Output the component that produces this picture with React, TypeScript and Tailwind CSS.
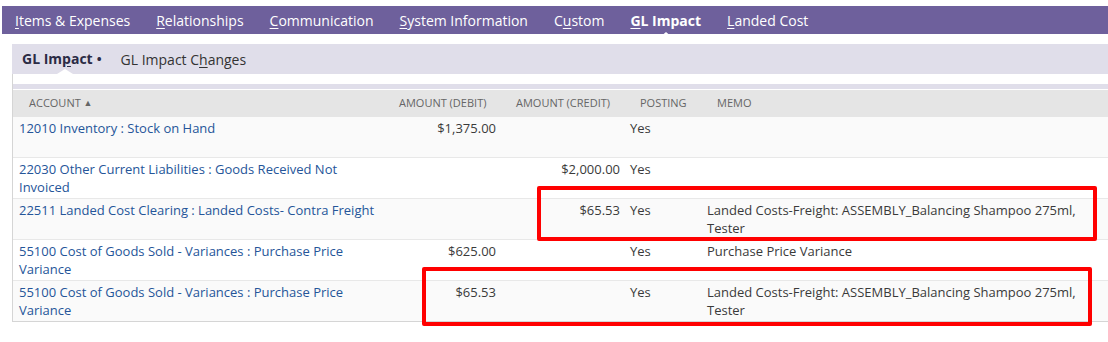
import React from "react"

const navItems: { pre: string; key: string; post: string; active?: boolean }[] = [
    { pre: "", key: "I", post: "tems & Expenses" },
    { pre: "", key: "R", post: "elationships" },
    { pre: "", key: "C", post: "ommunication" },
    { pre: "", key: "S", post: "ystem Information" },
    { pre: "C", key: "u", post: "stom" },
    { pre: "", key: "G", post: "L Impact", active: true },
    { pre: "", key: "L", post: "anded Cost" },
]

type Row = {
    account: React.ReactNode
    debit?: string
    credit?: string
    memo?: React.ReactNode
}

const rows: Row[] = [
    { account: "12010 Inventory : Stock on Hand", debit: "$1,375.00" },
    {
        account: (
            <>
                22030 Other Current Liabilities : Goods Received Not
                <br />
                Invoiced
            </>
        ),
        credit: "$2,000.00",
    },
    {
        account: "22511 Landed Cost Clearing : Landed Costs- Contra Freight",
        credit: "$65.53",
        memo: (
            <>
                Landed Costs-Freight: ASSEMBLY_Balancing Shampoo 275ml,
                <br />
                Tester
            </>
        ),
    },
    {
        account: (
            <>
                55100 Cost of Goods Sold - Variances : Purchase Price
                <br />
                Variance
            </>
        ),
        debit: "$625.00",
        memo: "Purchase Price Variance",
    },
    {
        account: (
            <>
                55100 Cost of Goods Sold - Variances : Purchase Price
                <br />
                Variance
            </>
        ),
        debit: "$65.53",
        memo: (
            <>
                Landed Costs-Freight: ASSEMBLY_Balancing Shampoo 275ml,
                <br />
                Tester
            </>
        ),
    },
]

const cols = "grid grid-cols-[380px_109px_124px_77px_1fr]"

export default function App() {
    return (
        <main
            className="relative w-[1108px] h-[342px] overflow-hidden bg-white"
            style={{ fontFamily: '"Open Sans", "Liberation Sans", sans-serif' }}
        >
            {/* Main tabs */}
            <nav className="mt-[6px] ml-[2px] h-[28px] bg-[#6e609c] flex items-center gap-[26px] pl-[13px] text-[14px] text-white whitespace-nowrap">
                {navItems.map((n) => (
                    <span key={n.post} className={`relative ${n.active ? "font-bold" : ""}`}>
                        {n.pre}
                        <span className="underline underline-offset-2">{n.key}</span>
                        {n.post}
                        {n.active && (
                            <span className="absolute left-1/2 -translate-x-1/2 top-[22px] w-0 h-0 border-l-[7px] border-r-[7px] border-b-[6px] border-l-transparent border-r-transparent border-b-white" />
                        )}
                    </span>
                ))}
            </nav>

            <div className="ml-[12px] mt-[10px]">
                {/* Sub tabs */}
                <div className="relative h-[30px] bg-[#e0deea] flex items-center pl-[10px] gap-[19px] text-[14px] text-[#333] whitespace-nowrap">
                    <span className="font-bold text-[#2b2b45]">
                        GL Im<span className="underline underline-offset-2">p</span>act
                        <span className="ml-[4px] text-[13px]">•</span>
                    </span>
                    <span>
                        GL Impact C<span className="underline underline-offset-2">h</span>anges
                    </span>
                    <span className="absolute left-[45px] bottom-0 w-0 h-0 border-l-[8px] border-r-[8px] border-b-[5px] border-l-transparent border-r-transparent border-b-white" />
                </div>

                {/* Table */}
                <div className="border-l border-b border-[#d5d5d5] pt-[10px] w-[1200px]">
                    <div className="h-[5px] bg-[#e0deea]" />
                    <div className={`${cols} mt-px h-[27px] items-center bg-[#e5e5e5] text-[11px] text-[#666] uppercase whitespace-nowrap`}>
                        <div className="pl-[16px]">
                            Account <span className="text-[9px] align-[1px]">▲</span>
                        </div>
                        <div className="pl-[6px]">Amount (Debit)</div>
                        <div className="pl-[14px]">Amount (Credit)</div>
                        <div className="pl-[14px]">Posting</div>
                        <div className="pl-[14px]">Memo</div>
                    </div>
                    {rows.map((r, i) => (
                        <div
                            key={i}
                            className={`${cols} ${i > 0 ? "border-t border-[#e8e8e8]" : ""} ${
                                i % 2 === 0 ? "bg-[#fafafa]" : "bg-white"
                            } min-h-[40px] pt-[2px] pb-[2px] text-[13px] leading-[18px] text-[#3a3a3a] whitespace-nowrap`}
                        >
                            <div className="pl-[6px] text-[#255599]">{r.account}</div>
                            <div className="pr-[6px] text-right">{r.debit}</div>
                            <div className="pr-[6px] text-right">{r.credit}</div>
                            <div className="pl-[4px]">Yes</div>
                            <div className="pl-[4px]">{r.memo}</div>
                        </div>
                    ))}
                </div>
            </div>

            {/* Highlight boxes */}
            <div className="absolute left-[537px] top-[186px] w-[560px] h-[55px] border-[4px] border-[#ff0000] rounded-[2px]" />
            <div className="absolute left-[422px] top-[267px] w-[670px] h-[59px] border-[4px] border-[#ff0000] rounded-[2px]" />
        </main>
    )
}
